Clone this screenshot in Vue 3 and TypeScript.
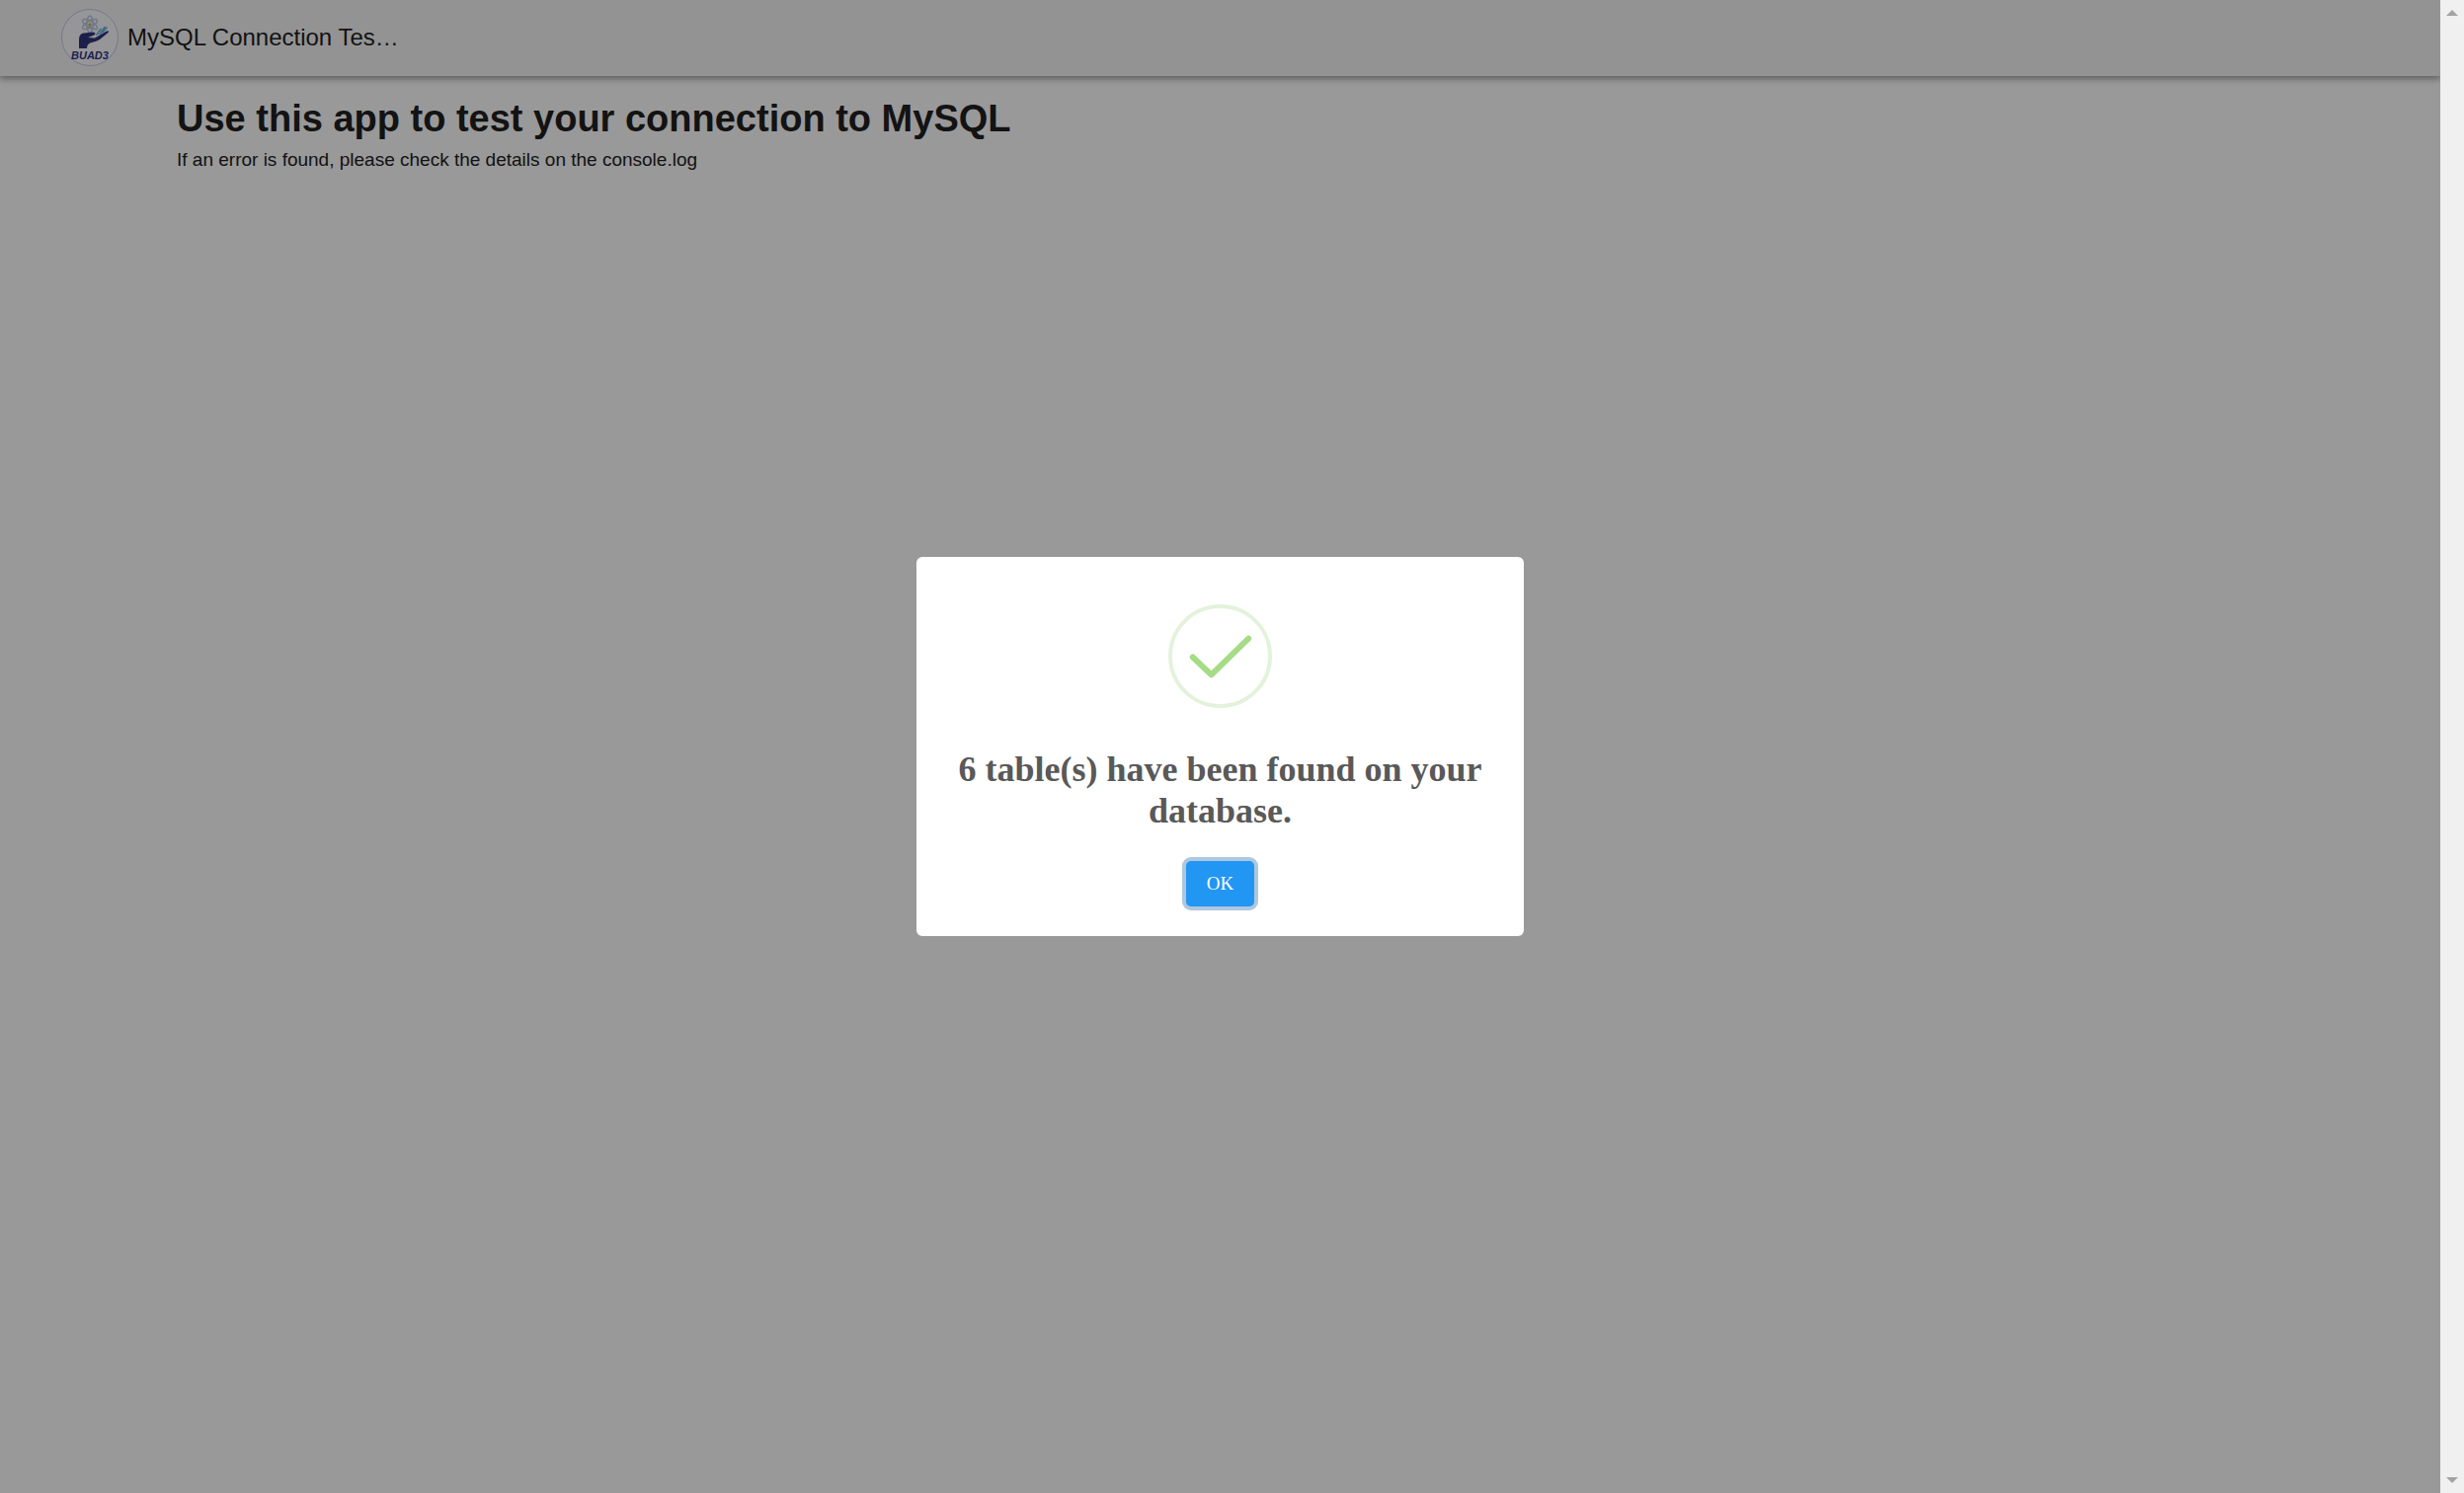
<script setup lang="ts">
import { ref } from 'vue'

const tableCount = ref<number>(6)
const dialogOpen = ref<boolean>(true)
</script>

<template>
  <div class="window">
    <div class="page">
      <header class="app-bar">
        <svg class="logo" viewBox="0 0 58 58" role="img" aria-label="BUAD3">
          <circle cx="29" cy="29" r="28.5" fill="#fafaff" stroke="#c4c8e4" stroke-width="1" />
          <g fill="none" stroke="#bcc8e2" stroke-width="1.5">
            <ellipse cx="29" cy="15.500" rx="3.2" ry="8.5" />
            <ellipse cx="29" cy="15.500" rx="3.2" ry="8.5" transform="rotate(60 29 15.500)" />
            <ellipse cx="29" cy="15.500" rx="3.2" ry="8.5" transform="rotate(120 29 15.500)" />
          </g>
          <circle cx="29" cy="16" r="1.7" fill="#d8b040" />
          <path d="M18 40V31Q18 25 23 24.500L32 23.500Q36 24 33.500 26.500L27 29L34 29.500L46 22.500Q49 21.500 47.500 24L39 31Q36 33 31 34Q26 35 26 40Z" fill="#31347e" />
          <path d="M36 26L40 20.500M39 26L44 18.500M42 23.500L46 19" stroke="#68b4d8" stroke-width="1.7" stroke-linecap="round" />
          <text x="10" y="51" class="logo-text">BUAD3</text>
        </svg>
        <div class="app-title">MySQL Connection Tes…</div>
      </header>
      <main class="content">
        <h1>Use this app to test your connection to MySQL</h1>
        <p>If an error is found, please check the details on the console.log</p>
      </main>
      <div v-if="dialogOpen" class="backdrop">
        <div class="dialog" role="dialog" aria-modal="true" aria-labelledby="dialog-title">
          <svg class="success" viewBox="0 0 106 106" aria-hidden="true">
            <circle cx="53" cy="53" r="51" fill="none" stroke="#e4f2dc" stroke-width="4" />
            <path d="M25 54L44 72L82 35" fill="none" stroke="#a5dc86" stroke-width="6" stroke-linecap="round" stroke-linejoin="round" />
          </svg>
          <h2 id="dialog-title">{{ tableCount }} table(s) have been found on your database.</h2>
          <button type="button" @click="dialogOpen = false">OK</button>
        </div>
      </div>
    </div>
    <div class="scrollbar" aria-hidden="true">
      <svg viewBox="0 0 12 6"><path d="M0 6L6 0L12 6Z" fill="#a3a3a3" /></svg>
      <svg viewBox="0 0 12 6"><path d="M0 0L6 6L12 0Z" fill="#a3a3a3" /></svg>
    </div>
  </div>
</template>

<style>
body {
  margin: 0;
}
</style>

<style scoped>
.window {
  display: flex;
  min-height: 100vh;
  font-family: "Liberation Sans", Arial, sans-serif;
  color: #212121;
}

.page {
  position: relative;
  flex: 1;
  overflow: hidden;
  background: #fff;
}

.app-bar {
  display: flex;
  align-items: center;
  gap: 9px;
  height: 77px;
  box-sizing: border-box;
  padding: 0 62px 2px;
  background: #f5f5f5;
  box-shadow: 0 2px 5px rgba(0, 0, 0, 0.2), 0 4px 6px rgba(0, 0, 0, 0.14), 0 1px 12px rgba(0, 0, 0, 0.12);
}

.logo {
  width: 58px;
  height: 58px;
}

.logo-text {
  font: italic bold 11px "Liberation Sans", Arial, sans-serif;
  fill: #31347e;
}

.app-title {
  font-size: 24px;
  line-height: 36px;
}

.content {
  padding: 20px 179px;
}

h1 {
  margin: 0;
  font-size: 38px;
  line-height: 46px;
}

p {
  margin: 5px 0 0;
  font-size: 19px;
  line-height: 28px;
}

.backdrop {
  position: absolute;
  inset: 0;
  display: flex;
  align-items: center;
  justify-content: center;
  background: rgba(0, 0, 0, 0.4);
}

.dialog {
  display: flex;
  flex-direction: column;
  align-items: center;
  width: 615px;
  box-sizing: border-box;
  padding: 48px 24px 30px;
  border-radius: 6px;
  background: #fff;
  font-family: "Liberation Serif", "Times New Roman", serif;
}

.success {
  width: 105px;
  height: 105px;
}

h2 {
  margin: 41px 0 30px;
  font-size: 36px;
  line-height: 42px;
  text-align: center;
  color: #595959;
}

button {
  padding: 12px 21px;
  border: 0;
  border-radius: 5px;
  background: #2196f3;
  box-shadow: 0 0 0 4px rgba(50, 115, 175, 0.4);
  color: #fff;
  font-family: inherit;
  font-size: 19px;
  line-height: 22px;
}

.scrollbar {
  display: flex;
  flex-direction: column;
  align-items: center;
  justify-content: space-between;
  width: 24px;
  box-sizing: border-box;
  padding: 10px 0;
  background: #f0f0f0;
}

.scrollbar svg {
  width: 12px;
  height: 6px;
}
</style>
